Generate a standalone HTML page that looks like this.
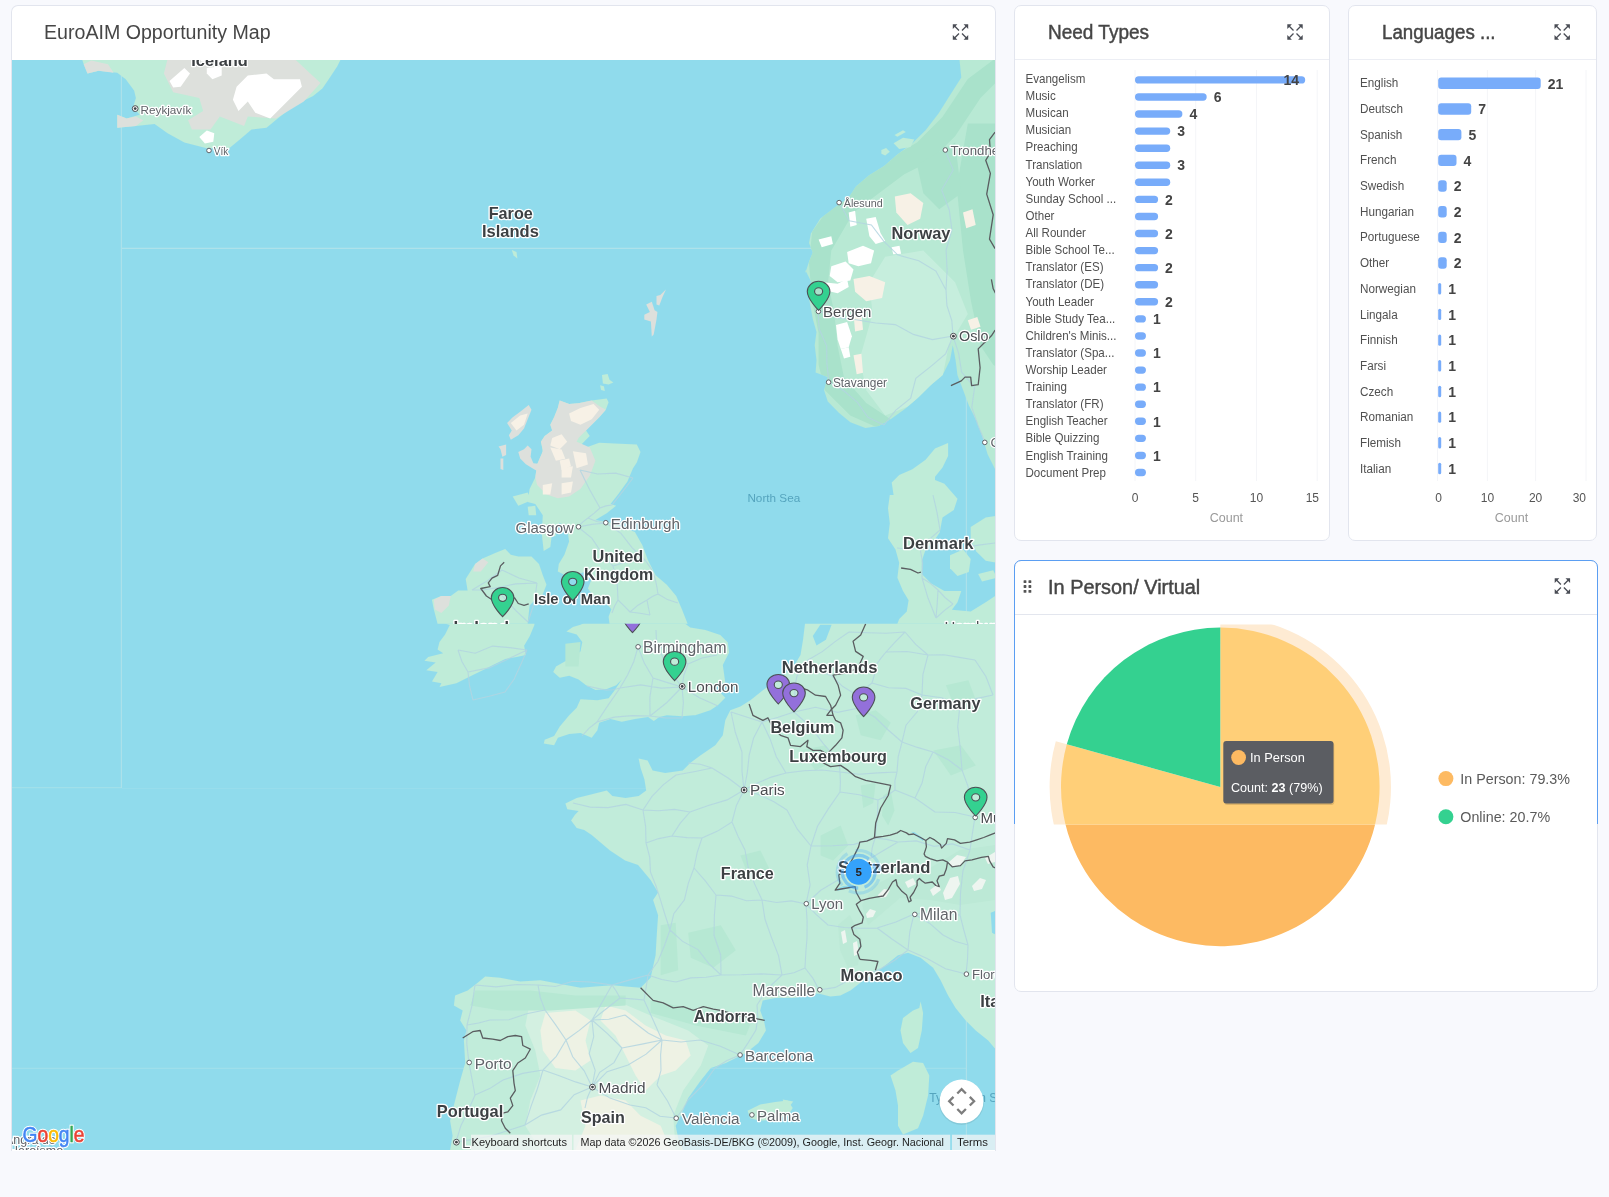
<!DOCTYPE html>
<html><head><meta charset="utf-8"><title>EuroAIM Opportunity Map</title>
<style>
html,body{margin:0;padding:0}
body{width:1609px;height:1197px;overflow:hidden;background:#f8f9fd;position:relative;font-family:"Liberation Sans", Arial, sans-serif;}
.card{position:absolute;background:#fff;border:1px solid #e2e5ee;border-radius:7px;box-sizing:border-box}
.ttl{position:absolute;font-size:20px;color:#464646;white-space:nowrap;line-height:24px;transform-origin:0 50%}
.med{-webkit-text-stroke:0.45px #464646}
.hdrline{position:absolute;left:0;right:0;height:1px;background:#eceef4}
svg text{font-family:"Liberation Sans", Arial, sans-serif}
</style></head><body>
<div id="root" style="will-change:transform;position:absolute;left:0;top:0;width:1609px;height:1197px;overflow:hidden">
<div class="card" style="left:11px;top:5px;width:985px;height:1146px;border-radius:7px 7px 0 0;border-bottom:none"></div>
<div class="ttl" style="left:44px;top:20.2px;transform:scaleX(0.98)" id="t1">EuroAIM Opportunity Map</div>
<svg width="983" height="1090" viewBox="12 60 983 1090" style="position:absolute;left:12px;top:60px;display:block" font-family='"Liberation Sans", Arial, sans-serif'>
<defs>
<filter id="bl" x="0" y="0" width="100%" height="100%" filterUnits="objectBoundingBox"><feGaussianBlur stdDeviation="0.7"/></filter>
<clipPath id="cnor"><polygon points="959.4,58.8 961.3,77.6 948.1,98.2 938.7,113.3 925.6,130.2 912.4,143.3 897.4,154.6 884.2,165.9 869.2,175.3 856,186.6 848.5,197.9 835.3,207.3 820.3,218.5 810.9,233.6 809,243 812.8,252.4 809,261.8 805.3,273 805.3,270 810.9,281.3 809,298.2 812.8,318.9 816.5,332 814.7,345.2 816.5,360.2 815.6,372.4 827.8,377.1 824.1,390.3 827.8,401.6 839.1,412.9 850.4,422.3 865.4,427.9 878.6,426 891.7,418.5 904.9,409.1 918,397.8 931.2,384.7 942.5,375.3 950,360.2 952.8,345.2 955.6,360.2 957.5,375.3 963.2,390.3 968.8,405.3 976.3,420.4 982,435.4 987.6,454.2 997,473 996,473 996,58" fill="#000" /></clipPath>
<clipPath id="cu"><rect x="12" y="60" width="983" height="563.8"/></clipPath>
<clipPath id="cl"><rect x="12" y="623.8" width="983" height="526.2"/></clipPath>
</defs>
<rect x="12" y="60" width="983" height="1090" fill="#90dbec"/>
<g stroke="#aee2ea" stroke-width="1.1" fill="none">
<path d="M121.4 60V788"/><path d="M121.4 248.4H995"/><path d="M966.4 60V1150"/><path d="M12 1068.2H966.4" opacity="0.7"/><path d="M12 787.6H121.4" opacity="0.6"/><path d="M121.4 788.5H995" opacity="0.25"/>
</g>
<g clip-path="url(#cu)">
<g filter="url(#bl)"><polygon points="81.9,58.7 83.7,64.3 87.5,73.6 98.6,70.8 117.3,72.7 125.7,79.2 134.1,90.4 135.9,97.9 133.1,107.2 139.7,114.7 126.6,118.4 117.3,114.7 117.3,127.7 135.9,125.9 154.6,124 167.6,133.3 184.4,142.6 206.8,148.2 229.2,148.2 240.4,138.9 251.5,129.6 266.5,127.7 277.7,118.4 294.4,105.3 313.1,96 322.4,88.6 329.9,77.4 337.3,66.2 341,58.7" fill="#bfecd8" />
<polygon points="167.6,58.7 294.4,58.7 320.5,83 303.8,101.6 275.8,118.4 247.8,116.5 244.1,125.9 219.8,116.5 210.5,129.6 191.9,129.6 188.1,120.3 203.1,110.9 199.3,97.9 173.2,92.3 163.9,73.6" fill="#dde0dc" />
<polygon points="83.7,64.3 87.5,73.6 98.6,70.8 113.6,72.7 108,64.3 91.2,60.6" fill="#dde0dc" />
<polygon points="117.3,114.7 117.3,127.7 135.9,125.9 143.4,120.3 135.9,116.5 126.6,118.4" fill="#dde0dc" />
<polygon points="236.6,86.7 247.8,75.5 266.5,73.6 273.9,79.2 300,79.2 301.9,86.7 290.7,97.9 277.7,110.9 270.2,118.4 255.3,112.8 247.8,101.6 238.5,110.9 232.9,99.8" fill="#ffffff" />
<polygon points="169.5,81.1 184.4,68.1 190,73.6 180.7,86.7 173.2,87.6" fill="#ffffff" />
<polygon points="206.8,68.1 221.7,66.2 221.7,75.5 212.4,79.2 206.8,73.6" fill="#ffffff" />
<polygon points="199.3,137 206.8,130.5 214.3,133.3 213.3,141.7 204.9,143.6" fill="#ffffff" />
<polygon points="959.4,58.8 961.3,77.6 948.1,98.2 938.7,113.3 925.6,130.2 912.4,143.3 897.4,154.6 884.2,165.9 869.2,175.3 856,186.6 848.5,197.9 835.3,207.3 820.3,218.5 810.9,233.6 809,243 812.8,252.4 809,261.8 805.3,273 805.3,270 810.9,281.3 809,298.2 812.8,318.9 816.5,332 814.7,345.2 816.5,360.2 815.6,372.4 827.8,377.1 824.1,390.3 827.8,401.6 839.1,412.9 850.4,422.3 865.4,427.9 878.6,426 891.7,418.5 904.9,409.1 918,397.8 931.2,384.7 942.5,375.3 950,360.2 952.8,345.2 955.6,360.2 957.5,375.3 963.2,390.3 968.8,405.3 976.3,420.4 982,435.4 987.6,454.2 997,473 996,473 996,58" fill="#b8e9d4" />
<g clip-path="url(#cnor)">
<polygon points="1012.2,56.8 993.2,60 967.8,79 942.4,117.1 917,142.5 894.8,155.2 869.4,171.1 847.1,187 828.1,209.2 812.2,231.4 809,263.2 812.2,301.3 818.6,333 818.6,364.8 824.9,390.2 850.3,415.6 878.9,428.3 894.8,421.9 866.2,402.9 844,377.5 837.6,345.7 834.4,314 828.1,282.2 831.3,250.5 853.5,212.4 878.9,193.3 904.3,174.3 929.7,161.6 955.1,136.2 980.5,98.1 999.5,79 1012.2,75.9" fill="#a9e2cb" />
<polygon points="967.8,123.5 1012.2,123.5 1012.2,377.5 993.2,364.8 980.5,345.7 971,301.3 963,250.5 956.7,187" fill="#a9e2cb" />
<polygon points="917,164.8 955.1,142.5 961.4,193.3 939.2,209.2 923.3,193.3" fill="#a9e2cb" />
<polygon points="885.2,256.8 923.3,250.5 955.1,282.2 967.8,314 948.7,345.7 942.4,377.5 917,402.9 885.2,415.6 866.2,390.2 859.8,358.4 872.5,314 869.4,282.2" fill="#c6eedd" />
<polygon points="894.8,196.5 910.6,193.3 923.3,202.9 920.2,218.7 907.5,225.1 896.3,212.4" fill="#f7f1e6" />
<polygon points="853.5,279 869.4,275.9 885.2,282.2 882.1,298.1 866.2,301.3 855.1,291.7" fill="#f7f1e6" />
<polygon points="853.5,314 861.4,312.4 863,329.8 855.1,331.4" fill="#f7f1e6" />
<polygon points="853.5,355.2 861.4,353.7 863,372.7 856.7,374.3" fill="#f7f1e6" />
<polygon points="963,212.4 972.5,209.2 975.7,225.1 966.2,228.3" fill="#f7f1e6" />
<polygon points="967.8,320.3 977.3,317.1 980.5,326.7 971,329.8" fill="#f7f1e6" />
<polygon points="866.2,218.7 875.7,217.1 880.5,233 885.2,241 875.7,244.1 869.4,236.2" fill="#ffffff" />
<polygon points="847.1,252.1 863,245.7 874.1,250.5 871,263.2 858.3,266.3 848.7,263.2" fill="#ffffff" />
<polygon points="831.3,266.3 845.6,261.6 853.5,269.5 850.3,280.6 837.6,282.2 829.7,275.9" fill="#ffffff" />
<polygon points="823.3,282.2 837.6,283.8 847.1,279 848.7,287 837.6,293.3 824.9,290.2" fill="#ffffff" />
<polygon points="818.6,239.4 831.3,236.2 832.9,244.1 821.7,247.3" fill="#ffffff" />
<polygon points="836,325.1 847.1,321.9 851.9,336.2 848.7,347.3 840.8,348.9 837.6,339.4" fill="#ffffff" />
<polygon points="840.8,348.9 848.7,347.3 850.3,356.8 844,358.4" fill="#ffffff" />
<polygon points="891.6,247.3 899.5,245.7 901.1,253.7 893.2,254.3" fill="#ffffff" />
<polygon points="848.7,212.4 855.1,210.8 856.7,225.1 850.3,226.7" fill="#ffffff" />
</g>
<polygon points="893.6,143.3 903,137.7 914.3,139.6 910.5,147.1 899.2,149" fill="#bfecd8" />
<polygon points="881.4,149.9 886.1,148 889.8,151.8 885.2,155.6 881.4,153.7" fill="#bfecd8" />
<polygon points="894.5,134.9 903,130.2 905.8,132.1 897.4,136.8" fill="#bfecd8" />
<polygon points="948.1,442.9 935,448.6 925.6,459.8 912.4,469.2 899.2,474.9 891.7,482.4 893.6,495 889.8,495 888,508.2 889.8,523.2 888,538.3 895.5,549.5 899.2,562.7 897.4,577.7 903,590.9 908.6,600.3 906.8,611.6 899.2,619.1 897.4,623.8 897.4,630.4 997,630.4 997,594.7 985.7,602.2 970.7,611.6 951.9,609.7 957.5,602.2 961.3,590.9 944.4,590.9 931.2,583.4 921.8,574 921.8,560.8 925.6,549.5 933.1,542 939.7,532.6 942.5,517.6 953.8,510.1 957.5,498.8 944.4,483.8 935,480 935,476.8 942.5,467.4 948.1,456.1" fill="#bfecd8" />
<polygon points="950,555.2 963.2,549.5 970.7,558.9 968.8,572.1 957.5,575.9 950,568.3" fill="#bfecd8" />
<polygon points="970.7,527 985.7,517.6 997,515.7 997,562.7 985.7,560.8 976.3,551.4 970.7,540.2" fill="#bfecd8" />
<polygon points="978.2,574 993.2,570.2 997,577.7 982,581.5" fill="#bfecd8" />
<polygon points="559.7,400.4 569.1,404.1 578.5,403.2 591.7,400.4 606.7,398.5 608.6,402.3 605.8,409.8 599.2,417.3 591.7,424.8 586,430.5 589.8,436.1 582.3,443.6 578.5,449.2 586,447.4 599.2,442.7 614.2,443.6 636.8,444.5 640.5,452.1 636.8,462.4 633,468.2 627.4,481.4 618,494.5 610.5,503.9 616.1,505.8 606.7,513.3 595.4,519.9 610.5,522.7 625.5,528.3 634.9,532.1 642.4,545.3 648,560.3 655.6,575.3 666.8,584.7 676.2,596 681.9,609.2 687.5,623.6 687.5,628 609.5,628 609.5,623.6 608.6,616.7 611.4,609.2 604.8,601.7 593.5,596 587.9,588.5 591.7,579.1 586,571.6 576.6,574.4 565.3,575.3 557.8,571.6 558.8,564.1 564.4,554.7 569.1,541.5 567.2,528.3 559.7,522.7 552.2,532.1 550.3,547.1 543.7,550.9 541.8,534 542.8,515.2 535.3,503.9 527.7,502 529.6,488.9 535.3,477.6 537.1,464.4 542.8,451.3 540.9,441.7 544.7,436.1 552.2,430.5 550.3,424.8 554.1,417.3 557.8,407.9" fill="#bfecd8" />
<polygon points="528.7,405.1 531.5,409.8 527.7,419.2 524,428.6 518.3,435.2 510.8,439.8 508.9,435.2 511.8,430.5 507.1,422.9 512.7,417.3 520.2,411.7" fill="#dde0dc" />
<polygon points="498.6,446.4 506.1,444.5 506.1,454.9 502.4,456.8 500.5,449.2" fill="#dde0dc" />
<polygon points="500.5,458.6 503.3,458.6 503.3,469.9 500.5,469" fill="#dde0dc" />
<polygon points="518.3,452.1 524,449.2 527.7,445.5 531.5,449.2 530.6,456.8 533.4,463.3 542.8,464.3 540.9,471.8 535.3,469.9 525.9,464.3 520.2,458.6" fill="#dde0dc" />
<polygon points="646.2,304.5 651.8,301.7 654.6,310.2 657.4,312 656.5,319.5 653.7,334.6 651.8,336.5 650.9,321.4 644.3,319.5 644.3,314.8 649.9,312" fill="#dde0dc" />
<polygon points="656.5,296.1 660.3,295.1 665.9,289.5 662.1,297.9 659.3,305.5 656.5,304.5" fill="#dde0dc" />
<polygon points="602,375 607.6,374.1 609.5,379.7 613.3,382.5 608.6,384.4 602.9,383.5" fill="#bfecd8" />
<polygon points="600.1,385.3 603.9,386.3 604.8,391 601.1,390" fill="#bfecd8" />
<polygon points="511.8,250 516.5,251.9 517.4,258.5 513.6,255.6" fill="#bfecd8" />
<polygon points="512.7,496.4 527.7,492.6 531.5,500.2 518.3,505.8" fill="#bfecd8" />
<polygon points="527.7,506.7 535.3,505.8 536.2,515.2 528.7,515.2" fill="#bfecd8" />
<polygon points="550.3,528.3 555,527.4 555.9,535.9 551.2,536.8" fill="#bfecd8" />
<polygon points="559.7,400.4 569.1,404.1 578.5,403.2 591.7,400.4 599.2,406 605.8,409.8 599.2,417.3 591.7,424.8 586,430.5 578.5,438 572.9,449.2 569.1,460.5 561.6,466.2 550.3,464.3 542.8,456.8 542.8,449.2 540.9,441.7 544.7,436.1 552.2,430.5 550.3,424.8 554.1,417.3 557.8,407.9" fill="#dde0dc" />
<polygon points="542.8,440 572.9,440 589.8,447.5 595.4,460.7 589.8,475.7 580.4,488.9 569.1,496.4 557.8,498.3 546.5,494.5 537.1,485.1 535.3,477.6 537.1,464.4 542.8,451.3" fill="#dde0dc" />
<polygon points="569.1,413.5 580.4,407.9 593.5,404.1 599.2,409.8 591.7,419.2 580.4,424.8 571,421.1" fill="#f7f1e6" />
<polygon points="552.2,438 561.6,434.2 567.2,441.7 559.7,449.2 550.3,445.5" fill="#f7f1e6" />
<polygon points="559.7,460.5 569.1,458.6 571,466.2 561.6,469.9" fill="#f7f1e6" />
<polygon points="510.8,422.9 520.2,415.4 527.7,413.5 524,424.8 516.5,430.5" fill="#f7f1e6" />
<polygon points="550.3,447.5 561.6,449.4 565.3,458.8 555.9,460.7" fill="#f7f1e6" />
<polygon points="561.6,468.2 572.9,466.3 571,477.6 561.6,477.6" fill="#f7f1e6" />
<polygon points="542.8,485.1 552.2,483.2 550.3,494.5 542.8,494.5" fill="#f7f1e6" />
<polygon points="572.9,451.3 586,453.2 587.9,464.4 576.6,468.2" fill="#f7f1e6" />
<polygon points="561.6,483.2 572.9,481.4 571,492.6 561.6,494.5" fill="#f7f1e6" />
<polygon points="437.5,628 437.5,623.6 433.8,609.2 431.9,599.8 441.3,596 450.7,596 458.2,590.4 467.6,590.4 465.7,579.1 475.1,564.1 482.6,558.4 495.8,552.8 505.2,549 510.8,554.7 518.3,556.5 531.5,556.5 539,564.1 542.8,575.3 546.5,584.7 542.8,594.1 535.3,599.8 529.6,605.4 527.7,623.6 527.7,628" fill="#bfecd8" />
<polygon points="433.8,599.8 441.3,596 450.7,596 448.8,605.4 441.3,612.9 434.7,609.2" fill="#dde0dc" />
<polygon points="475.1,564.1 482.6,558.4 488.3,562.2 480.8,571.6 473.2,571.6" fill="#dde0dc" />
<path d="M578 527 L591.9 524.4 L606 523M578 527 L582.6 522.1 L588 518M588 518 L594.2 513.2 L600 508M600 508 L605.8 505.9 L612 505M612 505 L622.6 491.6 L633 478M600 508 L589.4 489.3 L580 470M606 523 L621 533.3 L632 547.7 L645 560M578 527 L591.8 538.1 L601.6 552.7 L613 566M613 566 L628.7 561.3 L645 560M613 566 L617.2 582.8 L618 600M618 600 L624.1 605.9 L630 612M618 600 L614.5 606.3 L612 613M630 612 L638 605.2 L647 600M647 600 L652.3 596.6 L658 594M658 594 L656.7 586 L655 578M655 578 L651 568.5 L645 560M647 600 L648.4 607.5 L650 615M630 612 L640 613.3 L650 615M658 594 L667.5 599.6 L678 603M606 523 L596.7 521.5 L588 518M633 478 L615.7 473.1 L597.5 474 L580 470M537 583 L518.9 578 L502 570M537 583 L534.3 602.9 L528 622M502 570 L487.5 580.7 L472 590M472 590 L483.6 589.9 L495 588M495 588 L515.8 583.9 L537 583M495 588 L505.7 599.7 L516.4 611.2 L528 622M933 495 L937 512.4 L940 530M940 530 L929.9 538.9 L920 548M920 548 L908.5 549.2 L897 548M920 548 L922.6 562.9 L922 578M922 578 L930.4 583.4 L938 590M922 578 L928.1 598.3 L936 618M938 590 L937.2 604 L936 618M920 548 L932.5 548.4 L945 550M945 550 L961.7 548.2 L978.3 545.1 L995 543M936 618 L944.2 610.6 L953 604M938 590 L945 597.5 L953 604M953 336 L951.8 320.5 L946.9 305.5 L946 290M946 290 L947.1 270 L946.1 250 L951.9 230 L949.3 210 L941.7 190 L953.2 169.9 L945 150M953 336 L945.6 354 L930.9 366.3 L915.8 378.4 L910.7 398.2 L895.6 410.3 L884 425M884 425 L867.9 417.3 L857.4 402.4 L844.1 391 L829 382M829 382 L826.9 364.2 L826.7 346 L819.2 329 L818 311M818 311 L836.7 317.7 L856.3 319.7 L875.6 323 L895.3 324.6 L913.4 334.4 L932.4 339.6 L953 336M953 336 L958.7 353.6 L961.6 372 L974.6 387.3 L971.8 407.4 L977.8 424.9 L985 442M946 290 L935.9 271.1 L918.8 260.7 L897.9 255.1 L883.7 241.2 L871.4 225 L849.2 220.7 L839 202" fill="none" stroke="#b3d5e0" stroke-width="1.1" opacity="0.85"/>
<polyline points="504.2,562.2 500.5,565.9 497.7,575.3 492,578.2 488.3,582.9 490.2,586.6 480.8,588.5 486.4,596 492,599.8 503.3,601.7 514.6,597.9 518.3,603.5 524,605.4 528.7,603.9" fill="none" stroke="#5a5d60" stroke-width="1.3" stroke-linejoin="round" />
<polyline points="995.1,132.1 989.5,139.6 990.4,152.7 985.7,160.3 990.4,173.4 986.7,194.1 993.2,214.8 989.5,239.2 995.1,248.6" fill="none" stroke="#5a5d60" stroke-width="1.3" stroke-linejoin="round" />
<polyline points="991.4,279.4 993.2,288.8 996.1,294.4" fill="none" stroke="#5a5d60" stroke-width="1.3" stroke-linejoin="round" />
<polyline points="995.1,330.2 991.4,335.8 983.8,343.3 978.2,348.9 980.1,367.7 978.2,384.7 971.6,385.6 970.7,377.1 965,377.1 961.3,380.9 950.9,385.6" fill="none" stroke="#5a5d60" stroke-width="1.3" stroke-linejoin="round" />
<polyline points="901.1,568 910.5,569.3 918,573 920.9,572.1" fill="none" stroke="#5a5d60" stroke-width="1.3" stroke-linejoin="round" /></g>
<g stroke="#fff" stroke-width="2.6" stroke-linejoin="round" paint-order="stroke" style="paint-order:stroke">
<text x="191.3" y="65.904" font-size="16.4" font-weight="bold" fill="#3c4043" textLength="56.5" lengthAdjust="spacingAndGlyphs">Iceland</text>
<text x="140.6" y="113.812" font-size="11.7" font-weight="normal" fill="#5f6368" textLength="50.7" lengthAdjust="spacingAndGlyphs">Reykjavík</text>
<text x="213.7" y="154.614" font-size="10.04" font-weight="normal" fill="#5f6368" textLength="14.5" lengthAdjust="spacingAndGlyphs">Vík</text>
<text x="488.7" y="218.828" font-size="16.19" font-weight="bold" fill="#3c4043" textLength="44.1" lengthAdjust="spacingAndGlyphs">Faroe</text>
<text x="482" y="236.533" font-size="16.48" font-weight="bold" fill="#3c4043" textLength="56.8" lengthAdjust="spacingAndGlyphs">Islands</text>
<text x="950.4" y="155.052" font-size="13.2" font-weight="normal" fill="#5f6368" textLength="62.6033" lengthAdjust="spacingAndGlyphs">Trondheim</text>
<text x="843.8" y="206.874" font-size="10.76" font-weight="normal" fill="#5f6368" textLength="38.9" lengthAdjust="spacingAndGlyphs">Ålesund</text>
<text x="891.4" y="239.479" font-size="16.33" font-weight="bold" fill="#3c4043" textLength="59" lengthAdjust="spacingAndGlyphs">Norway</text>
<text x="823.1" y="317.093" font-size="14.98" font-weight="normal" fill="#4a4d51" textLength="48.3" lengthAdjust="spacingAndGlyphs">Bergen</text>
<text x="959" y="341.366" font-size="14.35" font-weight="normal" fill="#4a4d51" textLength="29.5" lengthAdjust="spacingAndGlyphs">Oslo</text>
<text x="832.9" y="386.673" font-size="11.87" font-weight="normal" fill="#5f6368" textLength="54.1" lengthAdjust="spacingAndGlyphs">Stavanger</text>
<text x="990.4" y="447.152" font-size="13.2" font-weight="normal" fill="#5f6368" textLength="69.7189" lengthAdjust="spacingAndGlyphs">Gothenburg</text>
<text x="747.4" y="502.123" font-size="11.73" font-weight="normal" fill="#4b9bb6" textLength="52.8" lengthAdjust="spacingAndGlyphs" stroke="none" opacity="0.85">North Sea</text>
<text x="903" y="549.229" font-size="16.47" font-weight="bold" fill="#3c4043" textLength="70.5" lengthAdjust="spacingAndGlyphs">Denmark</text>
<text x="944.4" y="632.4" font-size="15" font-weight="normal" fill="#4a4d51" textLength="61.6919" lengthAdjust="spacingAndGlyphs">Hamburg</text>
<text x="515.5" y="532.793" font-size="14.98" font-weight="normal" fill="#5f6368" textLength="58.3" lengthAdjust="spacingAndGlyphs">Glasgow</text>
<text x="610.8" y="528.565" font-size="15.18" font-weight="normal" fill="#5f6368" textLength="69.2" lengthAdjust="spacingAndGlyphs">Edinburgh</text>
<text x="592.6" y="562.368" font-size="16.3" font-weight="bold" fill="#3c4043" textLength="50.7" lengthAdjust="spacingAndGlyphs">United</text>
<text x="584.1" y="580.149" font-size="15.97" font-weight="bold" fill="#3c4043" textLength="69.2" lengthAdjust="spacingAndGlyphs">Kingdom</text>
<text x="533.9" y="603.835" font-size="14.82" font-weight="bold" fill="#3c4043" textLength="76.6" lengthAdjust="spacingAndGlyphs">Isle of Man</text>
<text x="453.6" y="632.584" font-size="16.9" font-weight="bold" fill="#3c4043" textLength="55.4" lengthAdjust="spacingAndGlyphs">Ireland</text>
</g>
<circle cx="135.2" cy="108.6" r="2.9" fill="#fff" stroke="#4a4d51" stroke-width="1"/><circle cx="135.2" cy="108.6" r="1.4" fill="#3c4043"/>
<circle cx="209" cy="150.5" r="2.3" fill="#fff" stroke="#5f6368" stroke-width="1"/>
<circle cx="945.3" cy="150" r="2.3" fill="#fff" stroke="#5f6368" stroke-width="1"/>
<circle cx="839.1" cy="202.6" r="2.3" fill="#fff" stroke="#5f6368" stroke-width="1"/>
<circle cx="818.4" cy="311.4" r="2.3" fill="#fff" stroke="#5f6368" stroke-width="1"/>
<circle cx="953.4" cy="336.2" r="2.9" fill="#fff" stroke="#4a4d51" stroke-width="1"/><circle cx="953.4" cy="336.2" r="1.4" fill="#3c4043"/>
<circle cx="828.6" cy="382.2" r="2.3" fill="#fff" stroke="#5f6368" stroke-width="1"/>
<circle cx="984.8" cy="442.4" r="2.3" fill="#fff" stroke="#5f6368" stroke-width="1"/>
<circle cx="578.5" cy="526.8" r="2.3" fill="#fff" stroke="#5f6368" stroke-width="1"/>
<circle cx="605.8" cy="522.7" r="2.3" fill="#fff" stroke="#5f6368" stroke-width="1"/>
<path d="M12 2C8.13 2 5 5.13 5 9c0 5.25 7 13 7 13s7-7.75 7-13c0-3.870-3.13-7-7-7zm0 9.5c-1.38 0-2.5-1.12-2.5-2.5s1.12-2.5 2.5-2.5 2.5 1.120 2.5 2.5-1.12 2.5-2.5 2.5z" transform="translate(799.229,278.39) scale(1.61429,1.455)" fill="#34d190" stroke="#4d5257" stroke-width="0.7" fill-rule="evenodd"/>
<path d="M12 2C8.13 2 5 5.13 5 9c0 5.25 7 13 7 13s7-7.75 7-13c0-3.870-3.13-7-7-7zm0 9.5c-1.38 0-2.5-1.12-2.5-2.5s1.12-2.5 2.5-2.5 2.5 1.120 2.5 2.5-1.12 2.5-2.5 2.5z" transform="translate(483.229,584.69) scale(1.61429,1.455)" fill="#34d190" stroke="#4d5257" stroke-width="0.7" fill-rule="evenodd"/>
<path d="M12 2C8.13 2 5 5.13 5 9c0 5.25 7 13 7 13s7-7.75 7-13c0-3.870-3.13-7-7-7zm0 9.5c-1.38 0-2.5-1.12-2.5-2.5s1.12-2.5 2.5-2.5 2.5 1.120 2.5 2.5-1.12 2.5-2.5 2.5z" transform="translate(553.329,568.69) scale(1.61429,1.455)" fill="#34d190" stroke="#4d5257" stroke-width="0.7" fill-rule="evenodd"/>
</g>
<g clip-path="url(#cl)">
<g filter="url(#bl)"><polygon points="437.6,617.5 437.6,621.3 449.8,625 445.1,634.4 439.5,642 437.6,649.5 443.2,653.2 428.2,657 424.4,660.8 435.7,662.6 426.3,670.2 437.6,672 432,681.4 441.4,683.3 439.5,687.1 456.4,683.3 471.4,675.8 482.7,670.2 494,664.5 505.3,658.9 516.5,657 525.9,655.1 524.1,645.7 529.7,636.3 534.4,625 534.4,617.5" fill="#bfecd8" />
<polygon points="588,617.5 588,621.3 580.5,624.7 572.9,626.9 566.4,631.6 576.7,634.4 582.3,642 580.5,651.4 569.2,658.9 556,666.4 553.2,672 559.8,677.7 569.2,675.8 578.6,679.5 586.1,685.2 595.5,689.9 606.8,688.9 616.2,685.2 621.8,679.5 614.3,690.8 608.6,698.3 597.4,700.2 580.5,699.3 576.7,707.7 569.2,715.3 559.8,726.5 554.1,735.9 544.7,739.7 543.8,743.5 554.1,745.3 557.9,737.8 569.2,734.1 580.5,733.1 591.7,737.8 597.4,730.3 599.2,722.8 610.5,719 621.8,721.8 635,719 648.1,717.1 653.8,720.9 659.4,717.1 666.9,715.3 682,716.2 693.2,715.3 695.2,715.3 710.3,710.3 717.8,705.2 725.3,697.7 720.3,692.7 710.3,685.2 725.3,682.7 722.8,665.1 729.1,652.6 727.8,642.6 720.3,635.1 705.3,630.1 690.2,627.5 685.2,623.8 685.2,617.5" fill="#bfecd8" />
<polygon points="805,617.5 805,623.8 803,640.1 800.5,655.1 793,667.6 780.5,677.7 762.9,690.2 750.4,700.2 740.4,706.5 730.3,710.3 725.3,720.3 722.8,735.3 715.3,745.3 700.3,755.4 690.2,762.9 682.7,770.4 665.2,772.9 652.6,770.4 647.6,760.4 638.6,758.4 640.6,767.9 644.4,779.2 646.2,790.5 638.7,796.1 625.6,798 612.4,796.1 606.8,790.5 588,795.2 576.7,798 565.4,803.6 567.3,809.2 578.6,811.1 574.8,814.9 571.1,820.5 576.7,828 584.2,829.9 591.7,835 610,850.6 625.1,860.6 638.1,865 650.6,880.1 658.1,892.6 653.1,900.1 658.1,915.2 656.9,932.7 655.6,955.3 650.6,977.8 640.6,987.8 625.6,986.6 613,985.3 595.5,986.6 580.5,987.8 560.4,984.1 540.4,980.3 520.3,981.6 500.3,977.8 485.2,976.6 477.7,982.8 467.7,990.4 455.1,995.4 453.9,1005.4 462.7,1010.4 460.2,1020.4 466.4,1030.5 463.9,1040.5 465.2,1063 460.2,1080.6 455.1,1100.6 450.1,1120.7 452.6,1135.7 450.1,1150 450.1,1160.8 683.2,1160.8 683.2,1150 678.2,1138.2 675.7,1125.7 680.7,1115.7 688.2,1098.1 700.8,1080.6 710.8,1068 725.8,1063 745.9,1053 758.4,1043 765.9,1030.5 763.9,1020.4 760.2,1010.4 762.7,1000.4 775.2,997.9 795.2,997.9 810.3,992.9 820.3,994.1 830.3,996.6 840.4,995.4 850.4,990.4 860.4,982.8 875.4,972.8 885.5,965.3 898,955.3 908,952.8 920.6,957.8 933.1,967.8 940.6,980.3 948.1,995.4 955.6,1007.9 965.7,1020.4 975.7,1030.5 988.2,1040.5 994.5,1048 1000.8,1050.5 998,1050 998,610" fill="#c1ecda" />
<polygon points="820.3,624.7 831.6,624.7 825.9,639.8 816.5,645.4 812.8,636" fill="#90dbec" />
<polygon points="990.7,912.7 997,910.2 997,935.2 992,932.7" fill="#90dbec" />
<polygon points="920.6,1001.6 923.1,1012.9 921.8,1030.5 918,1048 910.5,1053 903,1043 900.5,1030.5 903,1017.9 913,1010.4 919.3,1007.9" fill="#bfecd8" />
<polygon points="913,1061.8 923.1,1063 929.3,1075.6 928.1,1095.6 923.1,1115.7 918,1128.2 903,1134.5 898,1125.7 898,1105.6 895.5,1090.6 890.5,1075.6 898,1070.6" fill="#bfecd8" />
<polygon points="747.6,1110.7 760.2,1104.4 775.2,1101.9 787.7,1100.6 792.7,1108.1 787.7,1115.7 775.2,1119.4 760.2,1120.7 750.1,1118.2" fill="#bfecd8" />
<polygon points="782.7,1099.4 793.2,1101.4 790.2,1105.6 784,1103.6" fill="#bfecd8" />
<polygon points="862,905 875,885 900,872 930,868 960,850 995,845 995,900 960,905 930,900 900,898 880,915 868,925" fill="#bce9d6" />
<polygon points="838,925 850,915 862,940 858,965 848,968 840,950" fill="#bce9d6" />
<polygon points="878,895 884,889 890,890 886,897 880,898" fill="#eef5f0" />
<polygon points="949,862 957,855 966,857 960,866 951,867" fill="#eef5f0" />
<polygon points="943,893 950,878 958,876 960,884 952,898 945,900" fill="#eef5f0" />
<polygon points="972,886 980,878 986,880 982,889 974,891" fill="#eef5f0" />
<polygon points="866,914 870,909 876,911 873,917 867,918" fill="#eef5f0" />
<polygon points="841,932 845,930 847,942 843,944" fill="#eef5f0" />
<polygon points="853,943 857,941 859,954 854,956" fill="#eef5f0" />
<polygon points="930,890 938,884 941,890 933,896" fill="#eef5f0" />
<polygon points="905,882 913,878 916,884 908,888" fill="#eef5f0" />
<polygon points="985,858 995,852 995,862 988,864" fill="#eef5f0" />
<polygon points="530.3,1000.4 575.4,997.9 615.5,1000.4 650.6,1015.4 688.2,1030.5 708.3,1045.5 700.8,1065.5 683.2,1090.6 673.2,1115.7 675.7,1150 540.4,1150 525.3,1125.7 530.3,1100.6 540.4,1075.6 535.3,1050.5 525.3,1025.4" fill="#d3f0e1" />
<polygon points="545.4,1012.9 575.4,1010.4 590.5,1020.4 585.5,1040.5 590.5,1060.5 575.4,1070.6 555.4,1068 542.9,1050.5 540.4,1030.5" fill="#eef2e4" />
<polygon points="605.5,1005.4 625.6,1010.4 645.6,1025.4 665.7,1035.5 685.7,1040.5 690.7,1055.5 675.7,1070.6 660.7,1075.6 645.6,1090.6 635.6,1075.6 625.6,1055.5 615.5,1035.5 600.5,1020.4" fill="#eef2e4" />
<polygon points="580.5,1100.6 600.5,1095.6 625.6,1100.6 640.6,1115.7 660.7,1125.7 670.7,1150 575.4,1150 585.5,1125.7" fill="#eef2e4" />
<polygon points="883.2,795.5 890.7,790.5 894.5,810.5 888.2,825.5 882,815.5" fill="#b6e8d3" />
<polygon points="860.7,785.4 875.7,782.9 873.2,803 863.2,808" fill="#b6e8d3" />
<polygon points="855.6,715.3 875.7,710.3 890.7,722.8 880.7,740.3 860.7,735.3" fill="#b6e8d3" />
<polygon points="945.9,685.2 968.4,680.2 975.9,700.2 955.9,710.3" fill="#b6e8d3" />
<polygon points="933.3,750.4 960.9,745.3 975.9,765.4 950.9,775.4" fill="#b6e8d3" />
<polygon points="820.6,835.6 840.6,825.5 848.1,845.6 833.1,860.6 820.6,855.6" fill="#b6e8d3" />
<polygon points="740.4,855.6 760.4,850.6 770.4,870.7 750.4,880.7" fill="#b6e8d3" />
<polygon points="688.2,932.7 720.8,925.2 735.8,950.3 713.3,967.8 690.7,957.8" fill="#b6e8d3" />
<polygon points="660.7,925.2 675.7,922.7 678.2,970.3 660.7,975.3" fill="#b6e8d3" />
<polygon points="475.2,990.4 530.3,990.4 575.4,995.4 625.6,995.4 625.6,1005.4 550.4,1010.4 500.3,1010.4 470.2,1005.4" fill="#b6e8d3" />
<polygon points="650.6,1000.4 700.8,1010.4 750.9,1022.9 745.9,1035.5 695.7,1025.4 650.6,1012.9" fill="#b6e8d3" />
<polygon points="565.4,643.8 580.5,642 578.6,666.4 565.4,666.4" fill="#b6e8d3" />
<polygon points="800.5,750.4 825.6,745.3 835.6,760.4 815.5,770.4" fill="#b6e8d3" />
<polygon points="911.2,831.7 914.7,832.3 924.1,839.3 922.9,841.1 918.2,837.5" fill="#90dbec" />
<polygon points="836.4,889 843.4,886.1 853.9,885.5 855.1,887.8 845.7,889 837.5,890.8" fill="#90dbec" />
<polygon points="991.9,913.6 995.4,911.2 995.4,932.3 993.1,933.5" fill="#90dbec" />
<path d="M682 687 L667.5 682.6 L653 678M653 678 L644.3 663.1 L638 647M682 687 L683.9 675.2 L688 664M688 664 L702 658 L717 655M682 687 L699.4 697.7 L718 706M682 687 L683.4 702.5 L682 718M682 687 L666.9 702.5 L650 716M682 687 L661.3 688.1 L640.6 684.9 L620 688M620 688 L613.1 689.7 L606 690M606 690 L596.5 688.1 L587 686M620 688 L608.3 704.9 L597 722M597 722 L588.9 728.3 L582 736M620 688 L627.6 675 L633.8 661.5 L638 647M638 647 L647.4 645.5 L657 645M657 645 L656.3 637.5 L656 630M657 645 L672.8 654 L688 664M650 716 L632.1 715.6 L614.3 717.1 L597 722M650 716 L649.9 696.9 L653 678M682 687 L672 674 L664 659.8 L657 645M682 718 L665.9 718 L650 716M731 712 L746.5 716.9 L762 722M762 722 L778.1 717.3 L794 712M794 712 L794.1 705 L795 698M795 698 L794.7 686.9 L797 676M797 676 L802.3 667.9 L808 660M808 660 L810.6 663.9 L813 668M813 668 L822.4 672.2 L832 676M832 676 L842.5 686.3 L855 694M808 660 L822.3 651.6 L835.4 641.4 L849 632M849 632 L867.7 632.8 L886.3 633.2 L905 632M794 712 L815.5 707.2 L837.5 712.4 L859 708M859 708 L857.5 700.9 L855 694M855 694 L864 689.3 L872 683M872 683 L874.6 674.1 L876 665M876 665 L880.8 658.4 L886 652M886 652 L895.3 641.8 L905 632M886 652 L907.1 651.5 L928 655M872 683 L888.5 687.8 L906 688.4 L922 695M922 695 L922.9 674.7 L928 655M928 655 L915.7 644.3 L905 632M928 655 L943.9 654.8 L959.4 657.4 L975 660M975 660 L985.9 676.5 L993 695M922 695 L941.6 697.7 L960 705M960 705 L976.1 698.6 L993 695M859 708 L875 717.3 L888.2 730 L902 742M902 742 L906 725.2 L917.4 711.6 L922 695M902 742 L917.4 747.4 L933 752M933 752 L948.3 759.8 L962 770M962 770 L967.7 785.3 L971.5 801.1 L975 817M962 770 L960.3 748.4 L957.7 726.8 L960 705M902 742 L898.2 756.8 L897 772M897 772 L894.9 780.9 L895 790M895 790 L905 793.9 L915 798M915 798 L925 805 L935 812M935 812 L955.2 812.5 L975 817M895 790 L887 795.8 L878 800M878 800 L877.2 819.1 L875 838M875 838 L886.6 839.4 L898 842M875 838 L872.2 847.8 L871 858M871 858 L861.4 863.8 L851 868M851 868 L845.2 874.7 L838 880M838 880 L820.7 890.3 L806 904M898 842 L884.4 849.9 L871 858M898 842 L916.3 840.9 L934 846.4 L952.5 843.9 L970 850M975 817 L972.4 833.5 L970 850M970 850 L962.9 871.1 L960.5 892.9 L960 915M915 798 L922.1 783.1 L925.7 766.8 L933 752M897 772 L878 772.9 L859 774.3 L840 772M840 772 L839.4 765.9 L838 760M838 760 L823.5 743.8 L810.3 726.5 L794 712M840 772 L840.4 782 L840 792M840 792 L859.3 794.7 L878 800M840 792 L828.3 808.9 L817.5 826.3 L811 846M840 772 L822 770 L804 770.7 L786 773M786 773 L771.4 777.1 L757.5 783.1 L744 790M786 773 L776.3 756.8 L770.1 738.9 L762 722M744 790 L747.3 772.7 L749.2 755 L753.6 738 L762 722M744 790 L742 771.1 L742 752M742 752 L735.3 732.3 L731 712M744 790 L728.5 778.3 L712 768M712 768 L700.3 764.2 L688 763M712 768 L694 771.7 L676 775M676 775 L663.2 784.9 L652 796.4 L643 810M643 810 L625.9 804.4 L607.9 807.6 L590.3 807.1 L573 803M643 810 L645.6 826.4 L646 843M646 843 L658.7 838.6 L672 836M672 836 L680.1 823.4 L690 812M690 812 L708.3 805.5 L727.1 799.9 L744 790M690 812 L674.4 809.4 L658.7 810.8 L643 810M672 836 L687 837.6 L702 838M702 838 L717.6 831.1 L732 822M732 822 L736.4 805.4 L744 790M732 822 L738 836.3 L745 850M745 850 L748.2 867.5 L754.6 883.9 L762 900M702 838 L697.1 852.8 L694 868M694 868 L688.2 883.6 L684.4 899.9 L673.8 913.7 L670 930M694 868 L705.5 881.1 L716 895M716 895 L714.4 915.2 L714 935.3 L720.7 954.9 L721 975M716 895 L731.4 896.1 L746.4 900.8 L762 900M762 900 L776.6 902.5 L791.5 900.9 L806 904M744 790 L759.2 794.7 L773.5 801.5 L787 810M787 810 L797.3 829.2 L811 846M811 846 L807.2 865.1 L810.1 884.9 L806 904M811 846 L832.6 845.8 L854.1 844.4 L875 838M806 904 L816.6 914.9 L828 925M806 904 L807.1 921 L807 938M807 938 L805.8 953 L805 968M805 968 L813 978.4 L819 990M805 968 L793.9 972.8 L782 975M782 975 L767.8 988.6 L757 1005M782 975 L761.7 973.9 L741.3 974.8 L721 975M819 990 L835.4 987.4 L850.2 979.6 L866 975M866 975 L881.1 968.5 L895 960 L908 950M908 950 L909.8 931.8 L914 914M914 914 L895.9 922.1 L877 928M877 928 L860.6 928.2 L844.2 927.5 L828 925M877 928 L892.3 939.3 L908 950M914 914 L929.4 913 L944.7 914.2 L960 915M914 914 L929.4 923.2 L943 935M943 935 L955 941.2 L968 945M968 945 L967.5 959.5 L966 974M968 945 L963.8 930 L960 915M908 950 L927.1 958.6 L945.5 968.8 L966 974M646 843 L649.7 857.2 L650.5 872.2 L656 886M656 886 L660.7 900.7 L665.2 915.4 L670 930M670 930 L682.6 941.4 L698.1 949.6 L708.6 963.4 L721 975M670 930 L664.4 945.8 L658 961.3 L648 975M648 975 L661.7 979.5 L676 982M676 982 L690.7 977.9 L706 977.2 L721 975M762 900 L765 919.3 L771.5 937.6 L778.6 955.8 L782 975M648 975 L630 979.9 L612 985M612 985 L601 983.4 L590 982M590 982 L572.6 981.2 L555.5 986.5 L538 985M538 985 L517 984.5 L496 986.9 L475 985M475 985 L472.1 1005.2 L467 1025M467 1025 L466.8 1044.1 L469 1063M469 1063 L472 1079 L475 1095M475 1095 L468.3 1110.5 L460.9 1125.7 L456 1142M538 985 L540.3 997.8 L545 1010M545 1010 L555.7 1024.9 L566 1040M566 1040 L579.3 1030.4 L592 1020M592 1020 L602 1002.5 L612 985M592 1020 L606 1009 L620 998M620 998 L616.3 991.3 L612 985M620 998 L632 998.9 L644 1000M644 1000 L646.1 987.5 L648 975M644 1000 L653.1 1020 L662 1040M592 1020 L608.8 1019.2 L625 1015M625 1015 L636.7 1024.2 L648.5 1033.3 L662 1040M662 1040 L681 1042 L700 1040M700 1040 L720.4 1046.3 L740 1055M740 1055 L748.2 1042.6 L756 1030M756 1030 L757.8 1017.6 L757 1005M740 1055 L727 1060.5 L715 1068M715 1068 L702.9 1085.2 L688 1100M688 1100 L682.8 1109.5 L676 1118M662 1040 L660.6 1055 L661 1070.3 L657 1085M657 1085 L667.5 1100.9 L676 1118M592 1087 L607.1 1071.7 L628 1064.9 L646.1 1054.1 L662 1040M592 1087 L595.2 1070.2 L589.2 1053.5 L593.7 1036.8 L592 1020M592 1087 L584.2 1070.8 L572.7 1056.8 L566 1040M592 1087 L587.5 1097.2 L585 1108M592 1087 L610 1098.1 L630 1105M630 1105 L645.8 1107.8 L660 1116.2 L676 1118M592 1087 L575.5 1081.9 L559.3 1075.7 L543 1070M543 1070 L556.3 1056.4 L566 1040M543 1070 L522.6 1073.4 L503 1080M503 1080 L489.6 1088.6 L475 1095M543 1070 L537.5 1088.5 L530.9 1106.6 L525 1125M525 1125 L508.1 1130.6 L491.1 1136 L473.6 1139.3 L456 1142M592 1087 L574.2 1094.7 L560.7 1109.9 L541.5 1115.1 L525 1125M545 1010 L526.7 1013.7 L508.9 1019.8 L490 1020M490 1020 L478.6 1023 L467 1025M622 1048 L607.4 1033.6 L592 1020M622 1048 L642 1044.1 L662 1040M622 1048 L614 1062.6 L599.7 1072.3 L592 1087M527 650 L509.8 647.6 L492.5 646.1 L475.2 653.3 L458 650M527 650 L508 659 L488.9 667.9 L468 672M468 672 L469.6 686.2 L473 700M527 650 L520.8 664.6 L514.2 679 L505 692M505 692 L489.1 696.3 L473 700M458 650 L461.9 661.5 L468 672" fill="none" stroke="#b3d5e0" stroke-width="1.1" opacity="0.85"/>
<polyline points="865.7,623.8 860.7,635.1 853.1,641.3 855.6,651.4 863.2,656.4 858.1,667.6 848.1,672.7 833.1,675.2 838.1,685.2 840.6,695.2 835.6,705.2 830.6,710.3 826.8,715.3 833.1,715.3 835.6,720.3 840.6,722.8 843.1,730.3 841.9,737.8 835.6,745.3 830.6,750.4 826.8,754.1 823.1,762.9 830.6,766.6 840.6,765.4 848.1,770.4 855.6,776.7 865.7,780.4 878.2,782.9 890.7,785.4 888.2,795.5 880.7,808 875.7,823 874.4,838.1" fill="none" stroke="#5a5d60" stroke-width="1.3" stroke-linejoin="round" />
<polyline points="749.1,704 752.9,715.3 762.9,720.3 767.9,717.8 772.9,727.8 780.5,735.3 788,737.8 790.5,745.3 800.5,746.6 808,740.3 806.8,746.6 813,750.4 820.6,750.4 826.8,754.1" fill="none" stroke="#5a5d60" stroke-width="1.3" stroke-linejoin="round" />
<polyline points="793,685.2 800.5,687.7 808,690.2 815.5,695.2 825.6,696.5 830.6,705.2 833.1,715.3" fill="none" stroke="#5a5d60" stroke-width="1.3" stroke-linejoin="round" />
<polyline points="875,837.5 883.2,836.4 890.2,835.2 897.2,832.9 900.7,830.5 906.5,832.9 908.9,834.6 913.6,834 920.6,837.5 925.8,840.5 926.4,846.9 924.1,853.9 925.3,856.3 929.9,858.6 937,860.9 942.8,859.8 947.5,862.1 946.3,869.1 944,875 939.3,876.1 937,880.8 939.3,886.7 935.8,885.5 932.3,882 925.3,883.2 921.8,880.8 919.4,878.5 917.1,880.8 917.1,885.5 913.6,892.5 910.1,897.2 911.2,900.7 908.9,901.9 906.5,894.9 901.9,891.3 897.2,885.5 896,879.6 892.5,882 887.8,890.2 883.2,896 876.1,897.2 869.1,898.4 860.9,900.7 856.3,892.5 855.1,886.7 841.1,889 835.2,890.2 839.9,883.2 838.7,875 846.9,869.1 852.7,858.6 858.6,846.9 859.8,842.2 866.8,841.1 872.6,838.7 875,837.5" fill="none" stroke="#5a5d60" stroke-width="1.3" stroke-linejoin="round" />
<polyline points="925.8,840.5 929.9,837.5 934.6,839.9 940.5,844.6 941.6,848.1 946.3,843.4 947.5,838.7 954.5,839.9 960.4,843.4 969.7,842.2 976.7,839.9 983.7,837.5 989.6,835.2 995.4,832.9" fill="none" stroke="#5a5d60" stroke-width="1.3" stroke-linejoin="round" />
<polyline points="947.5,862.1 952.2,866.8 960.4,865.6 965,860.9 972,859.8 981.4,857.4 988.4,856.3 989.6,860.9 993.1,866.8 995.4,868" fill="none" stroke="#5a5d60" stroke-width="1.3" stroke-linejoin="round" />
<polyline points="860.9,900.7 856.3,904.2 859.8,911.2 863.3,917.1 862.1,922.9 855.1,925.3 851.6,927.6 853.9,934.6 859.8,939.3 860.9,946.3 857.4,952.2 859.8,959.2" fill="none" stroke="#5a5d60" stroke-width="1.3" stroke-linejoin="round" />
<polyline points="859.9,959.3 870.4,960.3 877.9,961.5 875.4,970.3" fill="none" stroke="#5a5d60" stroke-width="1.3" stroke-linejoin="round" />
<polyline points="640.6,987.8 648.1,995.4 653.1,1000.4 663.2,1002.9 673.2,1007.9 683.2,1006.6 693.2,1010.4 703.3,1006.6 713.3,1009.1 720.8,1010.4 738.3,1015.4 758.4,1019.2 764.7,1020.4" fill="none" stroke="#5a5d60" stroke-width="1.3" stroke-linejoin="round" />
<polyline points="462.7,1038 472.7,1031.7 480.2,1030.5 482.7,1038 492.7,1039.2 500.3,1040.5 507.8,1036.7 515.3,1035.5 521.6,1036.7 522.8,1045.5 530.3,1049.2 525.3,1058 517.8,1063 512.8,1070.6 514,1083.1 515.3,1090.6 510.3,1098.1 512.8,1105.6 507.8,1111.9 502.8,1113.2 501.5,1120.7 505.3,1128.2 510.3,1133.2" fill="none" stroke="#5a5d60" stroke-width="1.3" stroke-linejoin="round" /></g>
<g stroke="#fff" stroke-width="2.6" stroke-linejoin="round" style="paint-order:stroke">
<text x="643.1" y="652.734" font-size="15.65" font-weight="normal" fill="#5f6368" textLength="83.5" lengthAdjust="spacingAndGlyphs">Birmingham</text>
<text x="687.7" y="691.89" font-size="15.25" font-weight="normal" fill="#4a4d51" textLength="50.9" lengthAdjust="spacingAndGlyphs">London</text>
<text x="781.7" y="672.862" font-size="16.56" font-weight="bold" fill="#3c4043" textLength="95.7" lengthAdjust="spacingAndGlyphs">Netherlands</text>
<text x="770.4" y="733.132" font-size="16.2" font-weight="bold" fill="#3c4043" textLength="63.9" lengthAdjust="spacingAndGlyphs">Belgium</text>
<text x="910.3" y="709.028" font-size="16.19" font-weight="bold" fill="#3c4043" textLength="70.2" lengthAdjust="spacingAndGlyphs">Germany</text>
<text x="789.2" y="761.714" font-size="16.15" font-weight="bold" fill="#3c4043" textLength="97.8" lengthAdjust="spacingAndGlyphs">Luxembourg</text>
<text x="749.9" y="795.497" font-size="15.27" font-weight="normal" fill="#4a4d51" textLength="34.8" lengthAdjust="spacingAndGlyphs">Paris</text>
<text x="720.8" y="878.507" font-size="16.13" font-weight="bold" fill="#3c4043" textLength="52.9" lengthAdjust="spacingAndGlyphs">France</text>
<text x="838" y="872.88" font-size="16.61" font-weight="bold" fill="#3c4043" textLength="92.3" lengthAdjust="spacingAndGlyphs">Switzerland</text>
<text x="811.3" y="908.571" font-size="14.92" font-weight="normal" fill="#5f6368" textLength="31.8" lengthAdjust="spacingAndGlyphs">Lyon</text>
<text x="980.5" y="823.4" font-size="15" font-weight="normal" fill="#4a4d51" textLength="48.3545" lengthAdjust="spacingAndGlyphs">Munich</text>
<text x="920" y="920.334" font-size="15.65" font-weight="normal" fill="#5f6368" textLength="37.4" lengthAdjust="spacingAndGlyphs">Milan</text>
<text x="840.4" y="980.718" font-size="16.44" font-weight="bold" fill="#3c4043" textLength="62.1" lengthAdjust="spacingAndGlyphs">Monaco</text>
<text x="752.6" y="996.041" font-size="15.67" font-weight="normal" fill="#5f6368" textLength="62.7" lengthAdjust="spacingAndGlyphs">Marseille</text>
<text x="972" y="978.752" font-size="13.2" font-weight="normal" fill="#5f6368" textLength="51.3562" lengthAdjust="spacingAndGlyphs">Florence</text>
<text x="980.2" y="1006.94" font-size="16.5" font-weight="bold" fill="#3c4043" textLength="33.0161" lengthAdjust="spacingAndGlyphs">Italy</text>
<text x="693.7" y="1022.46" font-size="15.99" font-weight="bold" fill="#3c4043" textLength="62.2" lengthAdjust="spacingAndGlyphs">Andorra</text>
<text x="745.1" y="1060.95" font-size="15.15" font-weight="normal" fill="#5f6368" textLength="68.2" lengthAdjust="spacingAndGlyphs">Barcelona</text>
<text x="757.1" y="1120.61" font-size="15.03" font-weight="normal" fill="#5f6368" textLength="42.6" lengthAdjust="spacingAndGlyphs">Palma</text>
<text x="682" y="1123.71" font-size="15.31" font-weight="normal" fill="#5f6368" textLength="57.6" lengthAdjust="spacingAndGlyphs">València</text>
<text x="598.5" y="1092.85" font-size="15.41" font-weight="normal" fill="#4a4d51" textLength="47.1" lengthAdjust="spacingAndGlyphs">Madrid</text>
<text x="581" y="1123.19" font-size="16.09" font-weight="bold" fill="#3c4043" textLength="43.8" lengthAdjust="spacingAndGlyphs">Spain</text>
<text x="436.8" y="1117.3" font-size="16.4" font-weight="bold" fill="#3c4043" textLength="66.5" lengthAdjust="spacingAndGlyphs">Portugal</text>
<text x="474.7" y="1068.54" font-size="15.4" font-weight="normal" fill="#5f6368" textLength="36.8" lengthAdjust="spacingAndGlyphs">Porto</text>
<text x="462" y="1147.9" font-size="15" font-weight="normal" fill="#4a4d51" textLength="8.34229" lengthAdjust="spacingAndGlyphs">L</text>
<text x="929.3" y="1102.32" font-size="12" font-weight="normal" fill="#4b9bb6" textLength="81.3809" lengthAdjust="spacingAndGlyphs" stroke="none" opacity="0.85">Tyrrhenian Sea</text>
</g>
<circle cx="638.1" cy="646.8" r="2.3" fill="#fff" stroke="#5f6368" stroke-width="1"/>
<circle cx="682.2" cy="686.4" r="2.9" fill="#fff" stroke="#4a4d51" stroke-width="1"/><circle cx="682.2" cy="686.4" r="1.4" fill="#3c4043"/>
<circle cx="744.1" cy="790" r="2.9" fill="#fff" stroke="#4a4d51" stroke-width="1"/><circle cx="744.1" cy="790" r="1.4" fill="#3c4043"/>
<circle cx="806.3" cy="903.7" r="2.3" fill="#fff" stroke="#5f6368" stroke-width="1"/>
<circle cx="975.2" cy="817.5" r="2.3" fill="#fff" stroke="#5f6368" stroke-width="1"/>
<circle cx="914.8" cy="914.4" r="2.3" fill="#fff" stroke="#5f6368" stroke-width="1"/>
<circle cx="819.8" cy="989.8" r="2.3" fill="#fff" stroke="#5f6368" stroke-width="1"/>
<circle cx="966.4" cy="974.1" r="2.3" fill="#fff" stroke="#5f6368" stroke-width="1"/>
<circle cx="740.1" cy="1055" r="2.3" fill="#fff" stroke="#5f6368" stroke-width="1"/>
<circle cx="751.9" cy="1114.9" r="2.3" fill="#fff" stroke="#5f6368" stroke-width="1"/>
<circle cx="676.2" cy="1118.2" r="2.3" fill="#fff" stroke="#5f6368" stroke-width="1"/>
<circle cx="592.5" cy="1087.1" r="2.9" fill="#fff" stroke="#4a4d51" stroke-width="1"/><circle cx="592.5" cy="1087.1" r="1.4" fill="#3c4043"/>
<circle cx="469.2" cy="1062.5" r="2.3" fill="#fff" stroke="#5f6368" stroke-width="1"/>
<circle cx="456.4" cy="1142.2" r="2.9" fill="#fff" stroke="#4a4d51" stroke-width="1"/><circle cx="456.4" cy="1142.2" r="1.4" fill="#3c4043"/>
<path d="M12 2C8.13 2 5 5.13 5 9c0 5.25 7 13 7 13s7-7.75 7-13c0-3.870-3.13-7-7-7zm0 9.5c-1.38 0-2.5-1.12-2.5-2.5s1.12-2.5 2.5-2.5 2.5 1.120 2.5 2.5-1.12 2.5-2.5 2.5z" transform="translate(613.129,600.59) scale(1.61429,1.455)" fill="#9370db" stroke="#4d5257" stroke-width="0.7" fill-rule="evenodd"/>
<path d="M12 2C8.13 2 5 5.13 5 9c0 5.25 7 13 7 13s7-7.75 7-13c0-3.870-3.13-7-7-7zm0 9.5c-1.38 0-2.5-1.12-2.5-2.5s1.12-2.5 2.5-2.5 2.5 1.120 2.5 2.5-1.12 2.5-2.5 2.5z" transform="translate(655.229,648.47) scale(1.61429,1.465)" fill="#34d190" stroke="#4d5257" stroke-width="0.7" fill-rule="evenodd"/>
<path d="M12 2C8.13 2 5 5.13 5 9c0 5.25 7 13 7 13s7-7.75 7-13c0-3.870-3.13-7-7-7zm0 9.5c-1.38 0-2.5-1.12-2.5-2.5s1.12-2.5 2.5-2.5 2.5 1.120 2.5 2.5-1.12 2.5-2.5 2.5z" transform="translate(758.929,671.44) scale(1.61429,1.48)" fill="#9370db" stroke="#4d5257" stroke-width="0.7" fill-rule="evenodd"/>
<path d="M12 2C8.13 2 5 5.13 5 9c0 5.25 7 13 7 13s7-7.75 7-13c0-3.870-3.13-7-7-7zm0 9.5c-1.38 0-2.5-1.12-2.5-2.5s1.12-2.5 2.5-2.5 2.5 1.120 2.5 2.5-1.12 2.5-2.5 2.5z" transform="translate(774.629,680.12) scale(1.61429,1.44)" fill="#9370db" stroke="#4d5257" stroke-width="0.7" fill-rule="evenodd"/>
<path d="M12 2C8.13 2 5 5.13 5 9c0 5.25 7 13 7 13s7-7.75 7-13c0-3.870-3.13-7-7-7zm0 9.5c-1.38 0-2.5-1.12-2.5-2.5s1.12-2.5 2.5-2.5 2.5 1.120 2.5 2.5-1.12 2.5-2.5 2.5z" transform="translate(844.229,684.04) scale(1.61429,1.48)" fill="#9370db" stroke="#4d5257" stroke-width="0.7" fill-rule="evenodd"/>
<path d="M12 2C8.13 2 5 5.13 5 9c0 5.25 7 13 7 13s7-7.75 7-13c0-3.870-3.13-7-7-7zm0 9.5c-1.38 0-2.5-1.12-2.5-2.5s1.12-2.5 2.5-2.5 2.5 1.120 2.5 2.5-1.12 2.5-2.5 2.5z" transform="translate(956.329,784.32) scale(1.61429,1.44)" fill="#34d190" stroke="#4d5257" stroke-width="0.7" fill-rule="evenodd"/>
<g>
<circle cx="858.7" cy="871.8" r="21.3" fill="none" stroke="#35a2fb" stroke-opacity="0.22" stroke-width="3.2" stroke-dasharray="36 8.6" transform="rotate(20 858.7 871.8)"/>
<circle cx="858.7" cy="871.8" r="16.4" fill="none" stroke="#35a2fb" stroke-opacity="0.45" stroke-width="3.2" stroke-dasharray="28 6.35" transform="rotate(-150 858.7 871.8)"/>
<circle cx="858.7" cy="871.8" r="13" fill="#35a2fb"/>
<text x="858.7" y="875.8" font-size="11.5" font-weight="bold" fill="#2a2220" stroke="none" text-anchor="middle">5</text>
</g>
</g>
<!-- google logo -->
<g font-size="12.5" fill="#5f6368" stroke="#fff" stroke-width="2.4" style="paint-order:stroke"><text x="5" y="1143.5">Angra do</text><text x="9" y="1155.2">Heroísmo</text></g>
<text x="22.5" y="1141.5" font-size="21.5" stroke="#fff" stroke-width="2.6" fill="#fff" style="paint-order:stroke" textLength="62" lengthAdjust="spacingAndGlyphs">Google</text>
<text x="22.5" y="1141.5" font-size="21.5" stroke-width="0.55" textLength="62" lengthAdjust="spacingAndGlyphs"><tspan fill="#4285f4" stroke="#4285f4">G</tspan><tspan fill="#ea4335" stroke="#ea4335">o</tspan><tspan fill="#fbbc05" stroke="#fbbc05">o</tspan><tspan fill="#4285f4" stroke="#4285f4">g</tspan><tspan fill="#34a853" stroke="#34a853">l</tspan><tspan fill="#ea4335" stroke="#ea4335">e</tspan></text>
<!-- attribution -->
<g fill="#f5f5f5" opacity="0.72"><rect x="471" y="1134.7" width="101" height="15.3"/><rect x="573.5" y="1134.7" width="376.7" height="15.3"/><rect x="951.9" y="1134.7" width="43.1" height="15.3"/></g>
<g font-size="10.9" fill="#1f1f1f">
<text x="471.5" y="1146" textLength="95.5" lengthAdjust="spacingAndGlyphs">Keyboard shortcuts</text>
<text x="580.5" y="1146" textLength="363.5" lengthAdjust="spacingAndGlyphs">Map data ©2026 GeoBasis-DE/BKG (©2009), Google, Inst. Geogr. Nacional</text>
<text x="957" y="1146" textLength="31" lengthAdjust="spacingAndGlyphs">Terms</text>
</g>
<!-- pan control -->
<circle cx="961.5" cy="1102.4" r="22.5" fill="#000" opacity="0.08"/><circle cx="961.5" cy="1101.4" r="21.9" fill="#fff"/>
<g fill="none" stroke="#7d7d7d" stroke-width="2.3" stroke-linejoin="miter">
<path d="M957.3 1093.5L961.6 1089.2L965.9 1093.5"/><path d="M957.3 1109L961.6 1113.3L965.9 1109"/><path d="M953.5 1096.9L949.2 1101.2L953.5 1105.5"/><path d="M969.8 1096.9L974.1 1101.2L969.8 1105.5"/>
</g>
</svg>
<div class="card" style="left:1014px;top:5px;width:316px;height:536px"><div class="hdrline" style="top:53px"></div></div>
<div class="ttl med" style="left:1047.7px;top:20.2px;transform:scaleX(0.95)" id="t2">Need Types</div>
<div class="card" style="left:1348px;top:5px;width:249px;height:536px"><div class="hdrline" style="top:53px"></div></div>
<div class="ttl med" style="left:1381.6px;top:20.2px;transform:scaleX(0.937)" id="t3">Languages ...</div>
<div class="card" style="left:1014px;top:560px;width:584px;height:432px;border-color:#e2e5ee"><div class="hdrline" style="top:52.5px;background:#e3e6ee"></div></div>
<div style="position:absolute;left:1014px;top:560px;width:584px;height:264.4px;overflow:hidden"><div style="width:584px;height:432px;border:1px solid #5b9ef2;border-radius:7px;box-sizing:border-box"></div></div>
<div class="ttl med" style="left:1047.7px;top:574.6px;transform:scaleX(0.995)" id="t4">In Person/ Virtual</div>
<svg width="1609" height="1197" viewBox="0 0 1609 1197" style="position:absolute;left:0;top:0;pointer-events:none">
<path d="M959 30.5L954.3 25.8M962 30.5L966.7 25.8M959 33.5L954.3 38.2M962 33.5L966.7 38.2" fill="none" stroke="#4a4d55" stroke-width="1.3"/><path d="M952.8 24.3L957.4 24.3L952.8 28.9ZM968.2 24.3L963.6 24.3L968.2 28.9ZM952.8 39.7L957.4 39.7L952.8 35.1ZM968.2 39.7L963.6 39.7L968.2 35.1Z" fill="#4a4d55"/>
<path d="M1293.5 30.5L1288.8 25.8M1296.5 30.5L1301.2 25.8M1293.5 33.5L1288.8 38.2M1296.5 33.5L1301.2 38.2" fill="none" stroke="#4a4d55" stroke-width="1.3"/><path d="M1287.3 24.3L1291.9 24.3L1287.3 28.9ZM1302.7 24.3L1298.1 24.3L1302.7 28.9ZM1287.3 39.7L1291.9 39.7L1287.3 35.1ZM1302.7 39.7L1298.1 39.7L1302.7 35.1Z" fill="#4a4d55"/>
<path d="M1560.7 30.5L1556 25.8M1563.7 30.5L1568.4 25.8M1560.7 33.5L1556 38.2M1563.7 33.5L1568.4 38.2" fill="none" stroke="#4a4d55" stroke-width="1.3"/><path d="M1554.5 24.3L1559.1 24.3L1554.5 28.9ZM1569.9 24.3L1565.3 24.3L1569.9 28.9ZM1554.5 39.7L1559.1 39.7L1554.5 35.1ZM1569.9 39.7L1565.3 39.7L1569.9 35.1Z" fill="#4a4d55"/>
<path d="M1560.9 584.5L1556.2 579.8M1563.9 584.5L1568.6 579.8M1560.9 587.5L1556.2 592.2M1563.9 587.5L1568.6 592.2" fill="none" stroke="#4a4d55" stroke-width="1.3"/><path d="M1554.7 578.3L1559.3 578.3L1554.7 582.9ZM1570.1 578.3L1565.5 578.3L1570.1 582.9ZM1554.7 593.7L1559.3 593.7L1554.7 589.1ZM1570.1 593.7L1565.5 593.7L1570.1 589.1Z" fill="#4a4d55"/>
<g fill="#555"><rect x="1023.6" y="580.2" width="2.8" height="2.8" rx="0.6"/><rect x="1023.6" y="585.1" width="2.8" height="2.8" rx="0.6"/><rect x="1023.6" y="590" width="2.8" height="2.8" rx="0.6"/><rect x="1028.5" y="580.2" width="2.8" height="2.8" rx="0.6"/><rect x="1028.5" y="585.1" width="2.8" height="2.8" rx="0.6"/><rect x="1028.5" y="590" width="2.8" height="2.8" rx="0.6"/></g>
<line x1="1135" y1="70" x2="1135" y2="481" stroke="#f4f5f8" stroke-width="1"/>
<line x1="1195.7" y1="70" x2="1195.7" y2="481" stroke="#f4f5f8" stroke-width="1"/>
<line x1="1256.5" y1="70" x2="1256.5" y2="481" stroke="#f4f5f8" stroke-width="1"/>
<line x1="1317.2" y1="70" x2="1317.2" y2="481" stroke="#f4f5f8" stroke-width="1"/>
<text transform="translate(1025.5,83) scale(0.965,1)" font-size="12" fill="#505050">Evangelism</text>
<rect x="1135" y="76.2" width="170.2" height="7.4" rx="3.7" fill="#78acfa"/>
<text x="1283.5" y="85.1" font-size="14" font-weight="bold" fill="#444">14</text>
<text transform="translate(1025.5,100.117) scale(0.965,1)" font-size="12" fill="#505050">Music</text>
<rect x="1135" y="93.27" width="71.7" height="7.4" rx="3.7" fill="#78acfa"/>
<text x="1213.7" y="102.17" font-size="14" font-weight="bold" fill="#444">6</text>
<text transform="translate(1025.5,117.234) scale(0.965,1)" font-size="12" fill="#505050">Musican</text>
<rect x="1135" y="110.34" width="47.4" height="7.4" rx="3.7" fill="#78acfa"/>
<text x="1189.4" y="119.24" font-size="14" font-weight="bold" fill="#444">4</text>
<text transform="translate(1025.5,134.351) scale(0.965,1)" font-size="12" fill="#505050">Musician</text>
<rect x="1135" y="127.41" width="35.25" height="7.4" rx="3.7" fill="#78acfa"/>
<text x="1177.25" y="136.31" font-size="14" font-weight="bold" fill="#444">3</text>
<text transform="translate(1025.5,151.468) scale(0.965,1)" font-size="12" fill="#505050">Preaching</text>
<rect x="1135" y="144.48" width="35.25" height="7.4" rx="3.7" fill="#78acfa"/>
<text transform="translate(1025.5,168.585) scale(0.965,1)" font-size="12" fill="#505050">Translation</text>
<rect x="1135" y="161.55" width="35.25" height="7.4" rx="3.7" fill="#78acfa"/>
<text x="1177.25" y="170.45" font-size="14" font-weight="bold" fill="#444">3</text>
<text transform="translate(1025.5,185.702) scale(0.965,1)" font-size="12" fill="#505050">Youth Worker</text>
<rect x="1135" y="178.62" width="35.25" height="7.4" rx="3.7" fill="#78acfa"/>
<text transform="translate(1025.5,202.819) scale(0.965,1)" font-size="12" fill="#505050">Sunday School ...</text>
<rect x="1135" y="195.69" width="23.1" height="7.4" rx="3.7" fill="#78acfa"/>
<text x="1165.1" y="204.59" font-size="14" font-weight="bold" fill="#444">2</text>
<text transform="translate(1025.5,219.936) scale(0.965,1)" font-size="12" fill="#505050">Other</text>
<rect x="1135" y="212.76" width="23.1" height="7.4" rx="3.7" fill="#78acfa"/>
<text transform="translate(1025.5,237.053) scale(0.965,1)" font-size="12" fill="#505050">All Rounder</text>
<rect x="1135" y="229.83" width="23.1" height="7.4" rx="3.7" fill="#78acfa"/>
<text x="1165.1" y="238.73" font-size="14" font-weight="bold" fill="#444">2</text>
<text transform="translate(1025.5,254.17) scale(0.965,1)" font-size="12" fill="#505050">Bible School Te...</text>
<rect x="1135" y="246.9" width="23.1" height="7.4" rx="3.7" fill="#78acfa"/>
<text transform="translate(1025.5,271.287) scale(0.965,1)" font-size="12" fill="#505050">Translator (ES)</text>
<rect x="1135" y="263.97" width="23.1" height="7.4" rx="3.7" fill="#78acfa"/>
<text x="1165.1" y="272.87" font-size="14" font-weight="bold" fill="#444">2</text>
<text transform="translate(1025.5,288.404) scale(0.965,1)" font-size="12" fill="#505050">Translator (DE)</text>
<rect x="1135" y="281.04" width="23.1" height="7.4" rx="3.7" fill="#78acfa"/>
<text transform="translate(1025.5,305.521) scale(0.965,1)" font-size="12" fill="#505050">Youth Leader</text>
<rect x="1135" y="298.11" width="23.1" height="7.4" rx="3.7" fill="#78acfa"/>
<text x="1165.1" y="307.01" font-size="14" font-weight="bold" fill="#444">2</text>
<text transform="translate(1025.5,322.638) scale(0.965,1)" font-size="12" fill="#505050">Bible Study Tea...</text>
<rect x="1135" y="315.18" width="10.95" height="7.4" rx="3.7" fill="#78acfa"/>
<text x="1152.95" y="324.08" font-size="14" font-weight="bold" fill="#444">1</text>
<text transform="translate(1025.5,339.755) scale(0.965,1)" font-size="12" fill="#505050">Children's Minis...</text>
<rect x="1135" y="332.25" width="10.95" height="7.4" rx="3.7" fill="#78acfa"/>
<text transform="translate(1025.5,356.872) scale(0.965,1)" font-size="12" fill="#505050">Translator (Spa...</text>
<rect x="1135" y="349.32" width="10.95" height="7.4" rx="3.7" fill="#78acfa"/>
<text x="1152.95" y="358.22" font-size="14" font-weight="bold" fill="#444">1</text>
<text transform="translate(1025.5,373.989) scale(0.965,1)" font-size="12" fill="#505050">Worship Leader</text>
<rect x="1135" y="366.39" width="10.95" height="7.4" rx="3.7" fill="#78acfa"/>
<text transform="translate(1025.5,391.106) scale(0.965,1)" font-size="12" fill="#505050">Training</text>
<rect x="1135" y="383.46" width="10.95" height="7.4" rx="3.7" fill="#78acfa"/>
<text x="1152.95" y="392.36" font-size="14" font-weight="bold" fill="#444">1</text>
<text transform="translate(1025.5,408.223) scale(0.965,1)" font-size="12" fill="#505050">Translator (FR)</text>
<rect x="1135" y="400.53" width="10.95" height="7.4" rx="3.7" fill="#78acfa"/>
<text transform="translate(1025.5,425.34) scale(0.965,1)" font-size="12" fill="#505050">English Teacher</text>
<rect x="1135" y="417.6" width="10.95" height="7.4" rx="3.7" fill="#78acfa"/>
<text x="1152.95" y="426.5" font-size="14" font-weight="bold" fill="#444">1</text>
<text transform="translate(1025.5,442.457) scale(0.965,1)" font-size="12" fill="#505050">Bible Quizzing</text>
<rect x="1135" y="434.67" width="10.95" height="7.4" rx="3.7" fill="#78acfa"/>
<text transform="translate(1025.5,459.574) scale(0.965,1)" font-size="12" fill="#505050">English Training</text>
<rect x="1135" y="451.74" width="10.95" height="7.4" rx="3.7" fill="#78acfa"/>
<text x="1152.95" y="460.64" font-size="14" font-weight="bold" fill="#444">1</text>
<text transform="translate(1025.5,476.691) scale(0.965,1)" font-size="12" fill="#505050">Document Prep</text>
<rect x="1135" y="468.81" width="10.95" height="7.4" rx="3.7" fill="#78acfa"/>
<text x="1135" y="502" font-size="12" fill="#555" text-anchor="middle">0</text>
<text x="1195.7" y="502" font-size="12" fill="#555" text-anchor="middle">5</text>
<text x="1256.5" y="502" font-size="12" fill="#555" text-anchor="middle">10</text>
<text x="1319" y="502" font-size="12" fill="#555" text-anchor="end">15</text>
<text x="1226.4" y="521.8" font-size="12.5" fill="#999" text-anchor="middle">Count</text>
<line x1="1437.5" y1="70" x2="1437.5" y2="481" stroke="#f4f5f8" stroke-width="1"/>
<line x1="1487.4" y1="70" x2="1487.4" y2="481" stroke="#f4f5f8" stroke-width="1"/>
<line x1="1535.6" y1="70" x2="1535.6" y2="481" stroke="#f4f5f8" stroke-width="1"/>
<line x1="1586" y1="70" x2="1586" y2="481" stroke="#f4f5f8" stroke-width="1"/>
<text transform="translate(1360,87.4) scale(0.975,1)" font-size="12" fill="#505050">English</text>
<rect x="1438.2" y="77.6" width="102.5" height="11.4" rx="3" fill="#78acfa"/>
<text x="1547.7" y="88.6" font-size="14" font-weight="bold" fill="#444">21</text>
<text transform="translate(1360,113.08) scale(0.975,1)" font-size="12" fill="#505050">Deutsch</text>
<rect x="1438.2" y="103.28" width="33" height="11.4" rx="3" fill="#78acfa"/>
<text x="1478.2" y="114.28" font-size="14" font-weight="bold" fill="#444">7</text>
<text transform="translate(1360,138.76) scale(0.975,1)" font-size="12" fill="#505050">Spanish</text>
<rect x="1438.2" y="128.96" width="23.2" height="11.4" rx="3" fill="#78acfa"/>
<text x="1468.4" y="139.96" font-size="14" font-weight="bold" fill="#444">5</text>
<text transform="translate(1360,164.44) scale(0.975,1)" font-size="12" fill="#505050">French</text>
<rect x="1438.2" y="154.64" width="18.3" height="11.4" rx="3" fill="#78acfa"/>
<text x="1463.5" y="165.64" font-size="14" font-weight="bold" fill="#444">4</text>
<text transform="translate(1360,190.12) scale(0.975,1)" font-size="12" fill="#505050">Swedish</text>
<rect x="1438.2" y="180.32" width="8.5" height="11.4" rx="3" fill="#78acfa"/>
<text x="1453.7" y="191.32" font-size="14" font-weight="bold" fill="#444">2</text>
<text transform="translate(1360,215.8) scale(0.975,1)" font-size="12" fill="#505050">Hungarian</text>
<rect x="1438.2" y="206" width="8.5" height="11.4" rx="3" fill="#78acfa"/>
<text x="1453.7" y="217" font-size="14" font-weight="bold" fill="#444">2</text>
<text transform="translate(1360,241.48) scale(0.975,1)" font-size="12" fill="#505050">Portuguese</text>
<rect x="1438.2" y="231.68" width="8.5" height="11.4" rx="3" fill="#78acfa"/>
<text x="1453.7" y="242.68" font-size="14" font-weight="bold" fill="#444">2</text>
<text transform="translate(1360,267.16) scale(0.975,1)" font-size="12" fill="#505050">Other</text>
<rect x="1438.2" y="257.36" width="8.5" height="11.4" rx="3" fill="#78acfa"/>
<text x="1453.7" y="268.36" font-size="14" font-weight="bold" fill="#444">2</text>
<text transform="translate(1360,292.84) scale(0.975,1)" font-size="12" fill="#505050">Norwegian</text>
<rect x="1438.2" y="283.04" width="3" height="11.4" rx="1.5" fill="#78acfa"/>
<text x="1448.2" y="294.04" font-size="14" font-weight="bold" fill="#444">1</text>
<text transform="translate(1360,318.52) scale(0.975,1)" font-size="12" fill="#505050">Lingala</text>
<rect x="1438.2" y="308.72" width="3" height="11.4" rx="1.5" fill="#78acfa"/>
<text x="1448.2" y="319.72" font-size="14" font-weight="bold" fill="#444">1</text>
<text transform="translate(1360,344.2) scale(0.975,1)" font-size="12" fill="#505050">Finnish</text>
<rect x="1438.2" y="334.4" width="3" height="11.4" rx="1.5" fill="#78acfa"/>
<text x="1448.2" y="345.4" font-size="14" font-weight="bold" fill="#444">1</text>
<text transform="translate(1360,369.88) scale(0.975,1)" font-size="12" fill="#505050">Farsi</text>
<rect x="1438.2" y="360.08" width="3" height="11.4" rx="1.5" fill="#78acfa"/>
<text x="1448.2" y="371.08" font-size="14" font-weight="bold" fill="#444">1</text>
<text transform="translate(1360,395.56) scale(0.975,1)" font-size="12" fill="#505050">Czech</text>
<rect x="1438.2" y="385.76" width="3" height="11.4" rx="1.5" fill="#78acfa"/>
<text x="1448.2" y="396.76" font-size="14" font-weight="bold" fill="#444">1</text>
<text transform="translate(1360,421.24) scale(0.975,1)" font-size="12" fill="#505050">Romanian</text>
<rect x="1438.2" y="411.44" width="3" height="11.4" rx="1.5" fill="#78acfa"/>
<text x="1448.2" y="422.44" font-size="14" font-weight="bold" fill="#444">1</text>
<text transform="translate(1360,446.92) scale(0.975,1)" font-size="12" fill="#505050">Flemish</text>
<rect x="1438.2" y="437.12" width="3" height="11.4" rx="1.5" fill="#78acfa"/>
<text x="1448.2" y="448.12" font-size="14" font-weight="bold" fill="#444">1</text>
<text transform="translate(1360,472.6) scale(0.975,1)" font-size="12" fill="#505050">Italian</text>
<rect x="1438.2" y="462.8" width="3" height="11.4" rx="1.5" fill="#78acfa"/>
<text x="1448.2" y="473.8" font-size="14" font-weight="bold" fill="#444">1</text>
<text x="1438.5" y="502" font-size="12" fill="#555" text-anchor="middle">0</text>
<text x="1487.4" y="502" font-size="12" fill="#555" text-anchor="middle">10</text>
<text x="1535.6" y="502" font-size="12" fill="#555" text-anchor="middle">20</text>
<text x="1586" y="502" font-size="12" fill="#555" text-anchor="end">30</text>
<text x="1511.5" y="521.8" font-size="12.5" fill="#999" text-anchor="middle">Count</text>

<defs><clipPath id="pu"><rect x="1000" y="624.6" width="609" height="199.79999999999995"/></clipPath><clipPath id="pl"><rect x="1000" y="824.4" width="609" height="200"/></clipPath></defs>
<g clip-path="url(#pl)"><path d="M1220.3 786.9L1220.3 627.6A159.3 159.3 0 1 1 1066.79 744.329Z" fill="#fdba62"/></g>
<g clip-path="url(#pu)"><path d="M1220.3 616.2A170.7 170.7 0 1 1 1055.81 741.282L1067.76 744.596A158.3 158.3 0 1 0 1220.3 628.6Z" fill="#feebd3"/><path d="M1220.3 786.9L1220.3 627.6A159.3 159.3 0 1 1 1066.79 744.329Z" fill="#ffcf78"/></g>
<path d="M1220.3 786.9L1066.79 744.329A159.3 159.3 0 0 1 1220.3 627.6Z" fill="#34d190"/>

<!-- tooltip -->
<rect x="1224.3" y="742.6" width="110" height="62.5" rx="3" fill="#000" opacity="0.13"/>
<rect x="1223.3" y="741.1" width="110.2" height="62.5" rx="3" fill="#5b5d62"/>
<circle cx="1238.6" cy="757.5" r="7.4" fill="#fdba62"/>
<text x="1250" y="762" font-size="12.8" fill="#fff">In Person</text>
<text x="1231" y="792" font-size="12.6" fill="#fff">Count: <tspan font-weight="bold">23</tspan> (79%)</text>
<!-- legend -->
<circle cx="1445.9" cy="778.6" r="7.5" fill="#fdba62"/>
<text x="1460.3" y="783.6" font-size="14.3" fill="#5a5a5a">In Person: 79.3%</text>
<circle cx="1445.9" cy="816.7" r="7.5" fill="#34d190"/>
<text x="1460.3" y="821.7" font-size="14.3" fill="#5a5a5a">Online: 20.7%</text>
</svg>
</div>
</body></html>
